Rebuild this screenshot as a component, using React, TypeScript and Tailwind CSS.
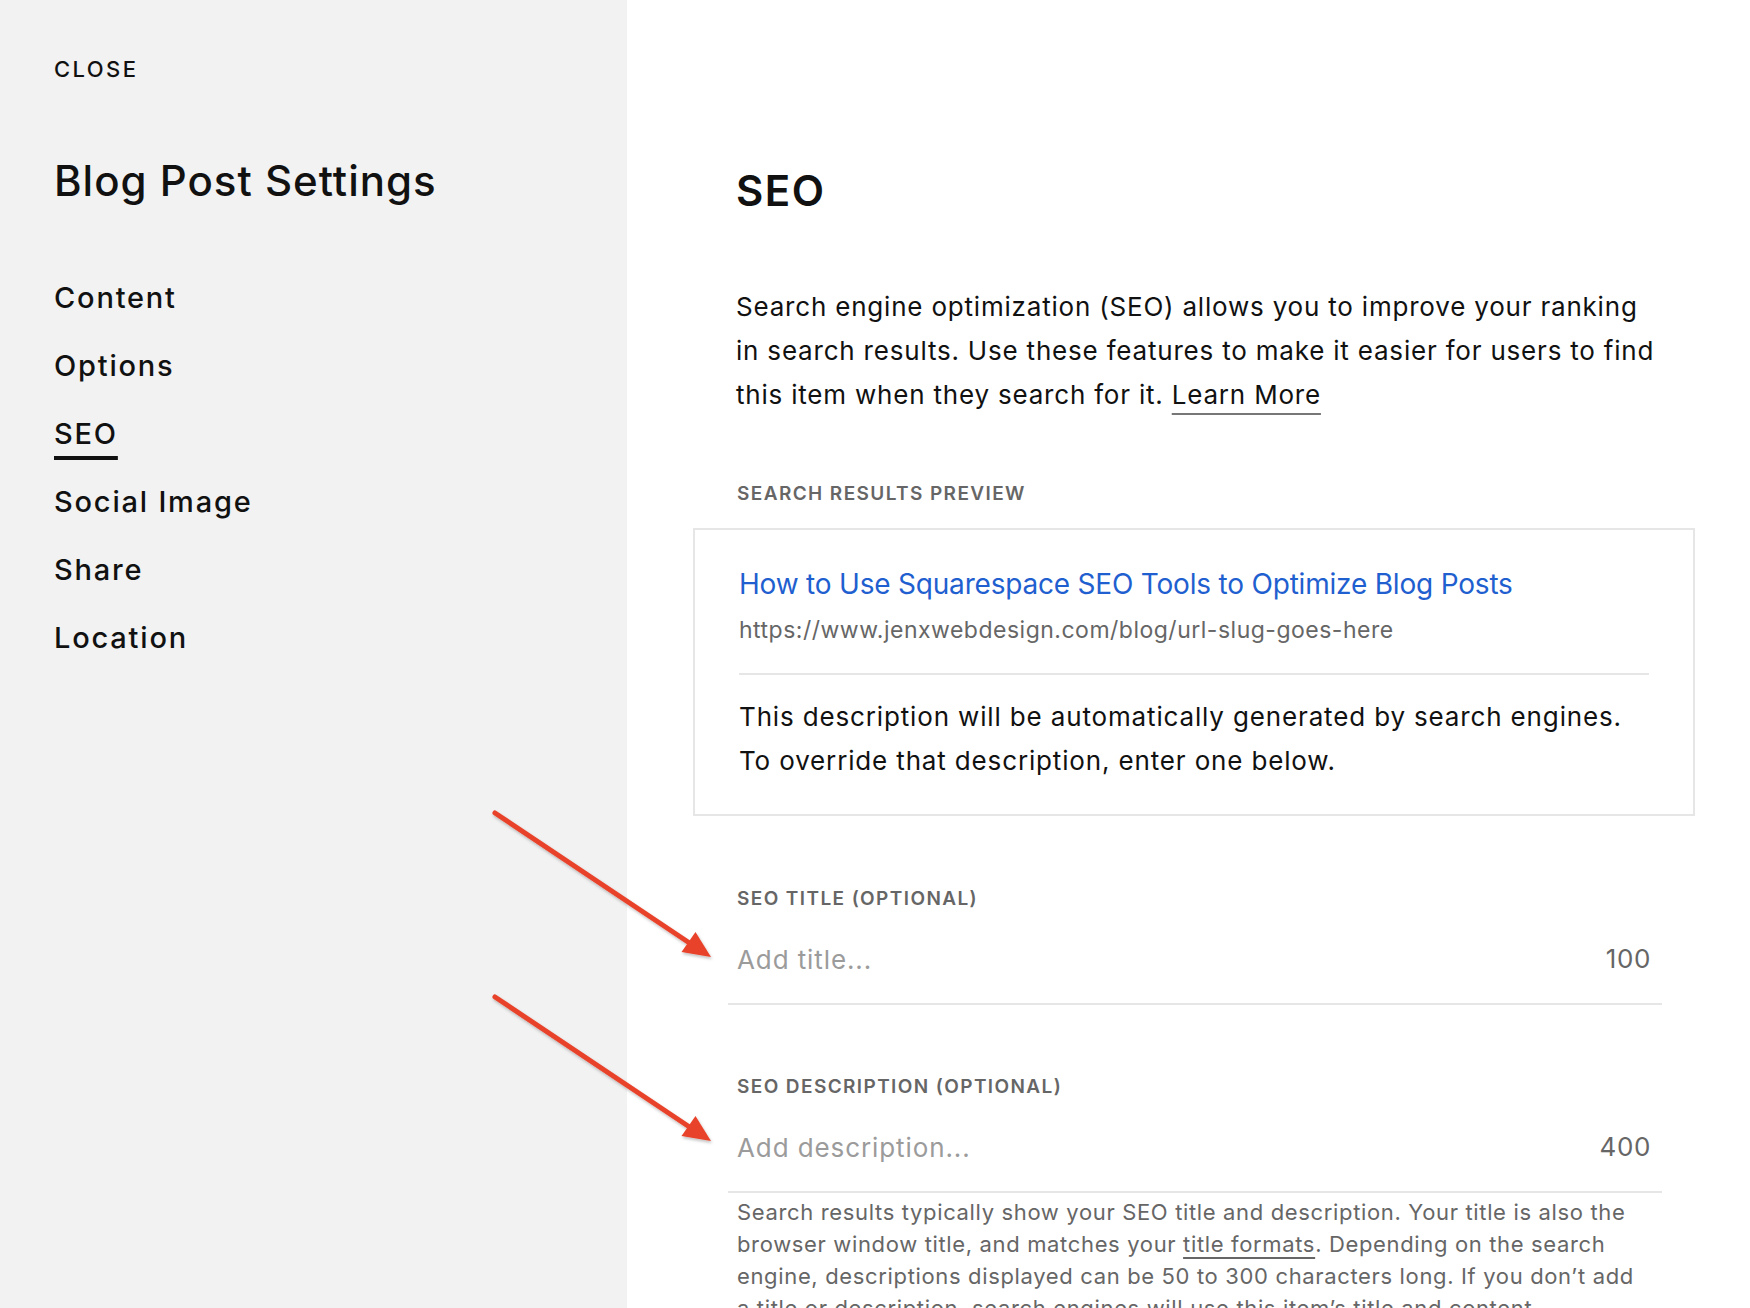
import React from "react";

const navItems = ["Content", "Options", "SEO", "Social Image", "Share", "Location"];

function Arrow({ y }: { y: number }) {
  // arrow drawn from upper left down to the field it points at
  return (
    <g transform={`translate(0 ${y})`}>
      <line x1="495" y1="0" x2="694" y2="133" stroke="#e8432b" strokeWidth="5" strokeLinecap="round" />
      <polygon points="711,144 681.5,139 695.5,119" fill="#e8432b" />
    </g>
  );
}

function Field({ label, placeholder, limit }: { label: string; placeholder: string; limit: number }) {
  return (
    <div>
      <div className="pl-[9px] text-[19px] leading-[24px] font-semibold tracking-[1.4px] text-[#666]">{label}</div>
      <div className="mt-[26px] flex items-center border-b-2 border-[#e6e6e6] pl-[9px] pr-[11px] pb-[22px]">
        <input
          type="text"
          placeholder={placeholder}
          className="h-[44px] flex-1 bg-transparent text-[26px] tracking-[0.9px] text-[#111] outline-none placeholder:text-[#9b9b9b]"
        />
        <span className="text-[26px] leading-[44px] tracking-[0.6px] text-[#666]">{limit}</span>
      </div>
    </div>
  );
}

export default function App() {
  return (
    <div
      className="relative flex h-[1308px] overflow-hidden bg-white text-[#111]"
      style={{ fontFamily: "Inter, 'Noto Sans', sans-serif" }}
    >
      <aside className="w-[627px] shrink-0 bg-[#f2f2f2] pl-[54px] pt-[58px]">
        <div className="text-[22px] leading-[22px] font-medium tracking-[2.4px]">CLOSE</div>
        <h1 className="mt-[76px] text-[42px] leading-[50px] font-medium tracking-[1px]">Blog Post Settings</h1>
        <nav className="mt-[58px] flex flex-col">
          {navItems.map((item) => (
            <div key={item} className="text-[29px] leading-[68px] font-medium tracking-[1.8px]">
              {item === "SEO" ? (
                <span className="underline decoration-[4px] underline-offset-[12px]">{item}</span>
              ) : (
                item
              )}
            </div>
          ))}
        </nav>
      </aside>

      <main className="flex-1 pl-[101px] pt-[166px]">
        <div className="w-[934px]">
          <h2 className="pl-[8px] text-[42px] leading-[50px] font-semibold tracking-[1.5px]">SEO</h2>
          <p className="mt-[69px] pl-[8px] text-[26px] leading-[44px] tracking-[0.8px]">
            Search engine optimization (SEO) allows you to improve your ranking in search results. Use these features
            to make it easier for users to find this item when they search for it.{" "}
            <a className="underline decoration-[#777] decoration-2 underline-offset-[9px]">Learn More</a>
          </p>

          <div className="mt-[65px] pl-[9px] text-[19px] leading-[24px] font-semibold tracking-[1.4px] text-[#666]">
            SEARCH RESULTS PREVIEW
          </div>

          <div className="mt-[22px] -ml-[35px] w-[1002px] border-2 border-[#e6e6e6] px-[44px] pt-[36px] pb-[31px]">
            <div className="text-[28px] leading-[36px] tracking-[-0.2px] text-[#1f5fcf]">
              How to Use Squarespace SEO Tools to Optimize Blog Posts
            </div>
            <div className="mt-[12px] text-[23px] leading-[32px] tracking-[0.5px] text-[#666]">
              https://www.jenxwebdesign.com/blog/url-slug-goes-here
            </div>
            <div className="mt-[27px] h-[2px] bg-[#e6e6e6]" />
            <p className="mt-[20px] text-[26px] leading-[44px] tracking-[0.85px]">
              This description will be automatically generated by search engines.
              <br />
              To override that description, enter one below.
            </p>
          </div>

          <div className="mt-[71px]">
            <Field label="SEO TITLE (OPTIONAL)" placeholder="Add title..." limit={100} />
          </div>
          <div className="mt-[70px]">
            <Field label="SEO DESCRIPTION (OPTIONAL)" placeholder="Add description..." limit={400} />
          </div>

          <p className="mt-[3px] pl-[9px] pr-[16px] text-[22px] leading-[32px] tracking-[0.65px] text-[#666]">
            Search results typically show your SEO title and description. Your title is also the browser window
            title, and matches your{" "}
            <a className="underline decoration-[#666] underline-offset-[5px]">title formats</a>. Depending on the
            search engine, descriptions displayed can be 50 to 300 characters long. If you don’t add a title or
            description, search engines will use this item’s title and content.
          </p>
        </div>
      </main>

      <svg className="pointer-events-none absolute inset-0" width="1750" height="1308">
        <defs>
          <filter id="shadow" x="-10%" y="-10%" width="120%" height="120%">
            <feDropShadow dx="1" dy="2" stdDeviation="1.5" floodColor="#000" floodOpacity="0.25" />
          </filter>
        </defs>
        <g filter="url(#shadow)">
          <Arrow y={813} />
          <Arrow y={997} />
        </g>
      </svg>
    </div>
  );
}
